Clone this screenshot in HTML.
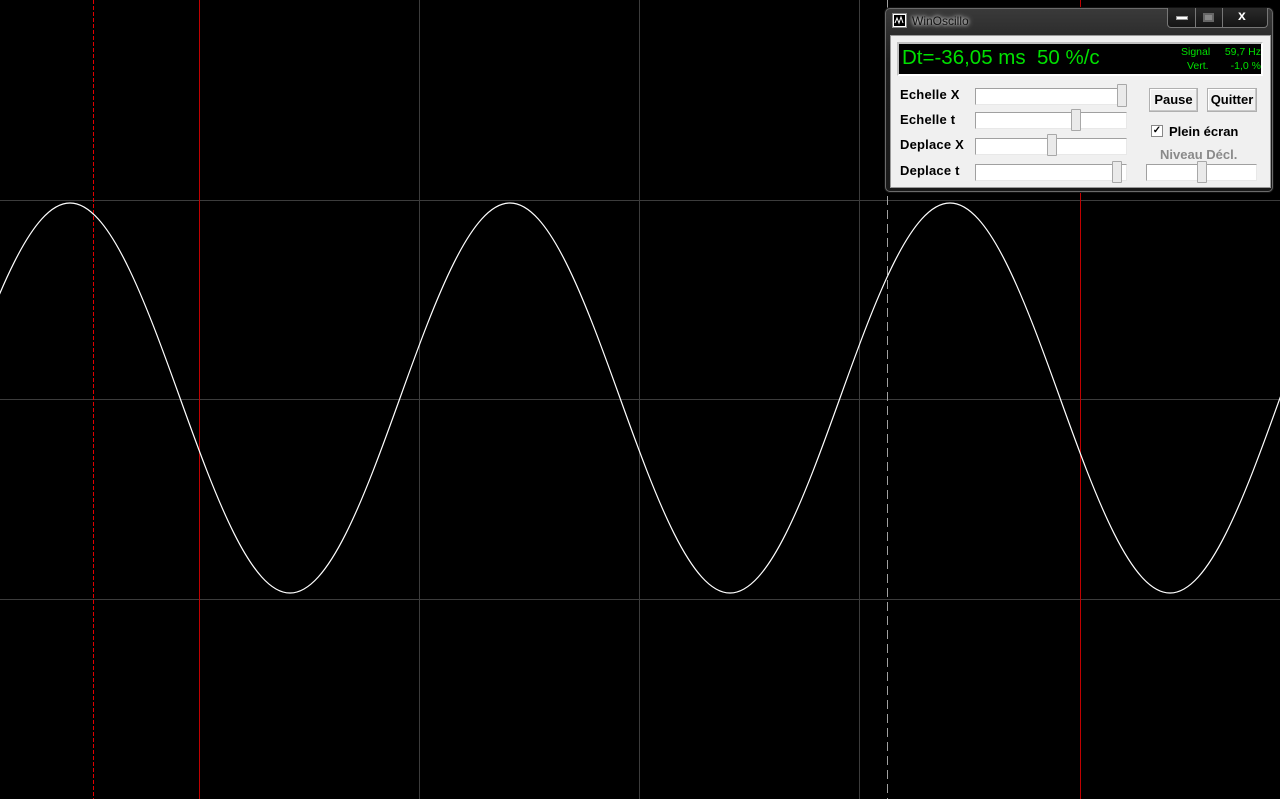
<!DOCTYPE html>
<html><head><meta charset="utf-8"><style>
*{margin:0;padding:0;box-sizing:border-box}
body{width:1280px;height:799px;background:#000;overflow:hidden;position:relative;font-family:"Liberation Sans",sans-serif}
.a{position:absolute}
.lbl{position:absolute;font-weight:bold;font-size:13px;letter-spacing:0.2px;color:#000;left:900px}
.sl{position:absolute;background:#fff;border-top:1px solid #a0a0a0;border-left:1px solid #a0a0a0;border-bottom:1px solid #e8e8e8;border-right:1px solid #e8e8e8;height:17px}
.th{position:absolute;width:10px;background:#eaeaea;border:1px solid #a8a8a8;border-radius:1px}
.btn{position:absolute;background:#f0f0f0;border:1px solid #b0b0b0;box-shadow:inset -1px -1px #c8c8c8,inset 1px 1px #fff;font-weight:bold;font-size:13px;text-align:center;line-height:22px}
</style></head><body>
<svg class="a" style="left:0;top:0" width="1280" height="799">
<g stroke="#3c3c3c" stroke-width="1">
<line x1="419.5" y1="0" x2="419.5" y2="799"/>
<line x1="639.5" y1="0" x2="639.5" y2="799"/>
<line x1="859.5" y1="0" x2="859.5" y2="799"/>
<line x1="0" y1="200.5" x2="1280" y2="200.5"/>
<line x1="0" y1="399.5" x2="1280" y2="399.5"/>
<line x1="0" y1="599.5" x2="1280" y2="599.5"/>
</g>
<g stroke="#c00000" stroke-width="1">
<line x1="199.5" y1="0" x2="199.5" y2="799"/>
<line x1="1080.5" y1="0" x2="1080.5" y2="799"/>
</g>
<line x1="93.5" y1="0" x2="93.5" y2="799" stroke="#e00000" stroke-dasharray="4,2"/>
<line x1="887.5" y1="0" x2="887.5" y2="799" stroke="#a0a0a0" stroke-dasharray="9,5"/>
<path fill="none" stroke="#fff" stroke-width="1.2" d="M-40,398 C-3.5,296.2 31.3,203 70,203 S143.5,296.2 180,398 S251.3,593 290,593 S363.5,499.8 400,398 S471.3,203 510,203 S583.5,296.2 620,398 S691.3,593 730,593 S803.5,499.8 840,398 S911.3,203 950,203 S1023.5,296.2 1060,398 S1131.3,593 1170,593 S1243.5,499.8 1280,398 S1351.3,203 1390,203"/>
</svg>

<div class="a" style="left:885px;top:8px;width:388px;height:184px;background:linear-gradient(#3a3a3a,#1e1e1e 30%,#1a1a1a);border:1px solid #6a6a6a;border-radius:5px;box-shadow:0 0 0 1px #111"></div>
<div class="a" style="left:892px;top:13px;width:15px;height:15px;background:#fff;border:1px solid #888"><svg width="13" height="13"><rect x="1" y="1" width="11" height="11" fill="#000"/><path d="M2,9 L4,4 L6,9 L8,3 L10,9" stroke="#fff" fill="none"/></svg></div>
<div class="a" style="left:912px;top:14px;font-size:12px;color:#111;text-shadow:0 0 6px #ddd,0 0 3px #eee">WinOscillo</div>
<div class="a" style="left:1167px;top:8px;width:101px;height:20px;border:1px solid #777;border-top:none;border-radius:0 0 4px 4px;background:linear-gradient(#2a2a2a,#151515)"></div>
<div class="a" style="left:1195px;top:8px;width:1px;height:19px;background:#777"></div>
<div class="a" style="left:1222px;top:8px;width:1px;height:19px;background:#777"></div>
<div class="a" style="left:1176px;top:16px;width:12px;height:4px;background:#fff;border:1px solid #999"></div>
<div class="a" style="left:1203px;top:13px;width:11px;height:9px;background:#888;border:2px solid #666"></div>
<div class="a" style="left:1238px;top:7px;color:#fff;font-weight:bold;font-size:14px">x</div>

<div class="a" style="left:890px;top:35px;width:381px;height:153px;background:#f0f0f0;border:1px solid #999"></div>
<div class="a" style="left:897px;top:42px;width:366px;height:34px;background:#000;border:2px solid #c0c0c0;border-right-color:#fff;border-bottom-color:#fff"></div>
<div class="a" style="left:902px;top:46px;color:#00e000;font-size:20.5px">Dt=-36,05 ms&nbsp;&nbsp;50 %/c</div>
<div class="a" style="left:1181px;top:45px;color:#00e000;font-size:10.5px;line-height:14px">Signal</div>
<div class="a" style="left:1187px;top:59px;color:#00e000;font-size:10.5px;line-height:14px">Vert.</div>
<div class="a" style="left:1212px;top:45px;width:49px;text-align:right;color:#00e000;font-size:10.5px;line-height:14px">59,7 Hz</div>
<div class="a" style="left:1212px;top:59px;width:49px;text-align:right;color:#00e000;font-size:10.5px;line-height:14px">-1,0 %</div>

<div class="lbl" style="top:87px">Echelle X</div>
<div class="lbl" style="top:112px">Echelle t</div>
<div class="lbl" style="top:137px">Deplace X</div>
<div class="lbl" style="top:163px">Deplace t</div>
<div class="sl" style="left:975px;top:88px;width:152px"></div>
<div class="sl" style="left:975px;top:112px;width:152px"></div>
<div class="sl" style="left:975px;top:138px;width:152px"></div>
<div class="sl" style="left:975px;top:164px;width:152px"></div>
<div class="sl" style="left:1146px;top:164px;width:111px"></div>
<div class="th" style="left:1117px;top:84px;height:23px"></div>
<div class="th" style="left:1071px;top:109px;height:22px"></div>
<div class="th" style="left:1047px;top:134px;height:22px"></div>
<div class="th" style="left:1112px;top:161px;height:22px"></div>
<div class="th" style="left:1197px;top:161px;height:22px"></div>

<div class="btn" style="left:1149px;top:88px;width:49px;height:24px">Pause</div>
<div class="btn" style="left:1207px;top:88px;width:50px;height:24px">Quitter</div>
<div class="a" style="left:1151px;top:125px;width:12px;height:12px;background:#fff;border:1px solid #888;font-size:10px;line-height:10px;text-align:center;font-weight:bold">✓</div>
<div class="a" style="left:1169px;top:124px;font-weight:bold;font-size:13px">Plein écran</div>
<div class="a" style="left:1160px;top:147px;font-weight:bold;font-size:13px;color:#8a8a8a">Niveau Décl.</div>
</body></html>
